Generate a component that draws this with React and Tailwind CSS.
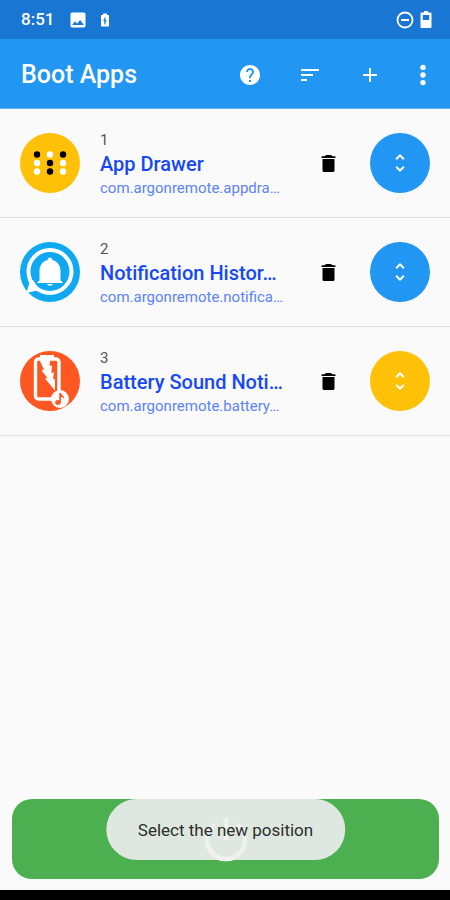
const apps = [
  { id: 1, name: "App Drawer", pkg: "com.argonremote.appdra…", Icon: DrawerIcon, color: "bg-[#2196f3]" },
  { id: 2, name: "Notification Histor…", pkg: "com.argonremote.notifica…", Icon: BellIcon, color: "bg-[#2196f3]" },
  { id: 3, name: "Battery Sound Noti…", pkg: "com.argonremote.battery…", Icon: BatteryIcon, color: "bg-[#ffc107]" },
];

function DrawerIcon() {
  const dots = [
    [17, 21.5, "#000"], [30, 21.5, "#fff"], [43, 21.5, "#000"],
    [17, 30, "#fff"], [30, 30, "#000"], [43, 30, "#fff"],
    [17, 38.5, "#fff"], [30, 38.5, "#000"], [43, 38.5, "#fff"],
  ];
  return (
    <svg viewBox="0 0 60 60" className="size-15 shrink-0" aria-hidden="true">
      <circle cx="30" cy="30" r="30" fill="#ffc107" />
      {dots.map(([x, y, c]) => (
        <circle key={`${x}-${y}`} cx={x} cy={y} r="3.2" fill={c} />
      ))}
    </svg>
  );
}

function BellIcon() {
  return (
    <svg viewBox="0 0 60 60" className="size-15 shrink-0" aria-hidden="true">
      <circle cx="30" cy="30" r="30" fill="#10a9f1" />
      <circle cx="30" cy="29.500" r="21.500" fill="none" stroke="#fff" strokeWidth="4" />
      <path d="M6.500 51 10 38.500 13 38l5.500 8.500-1.500 2Z" fill="#fff" />
      <path d="M30 15.500c1.500 0 2.300 1 2.300 2.500 5.200 1.300 8.200 5.500 8.200 11v9.500l2 1.500v1H17.500v-1l2-1.500V29c0-5.500 3-9.700 8.200-11 0-1.500.8-2.500 2.300-2.500Z" fill="#fff" />
      <path d="M27 42h6c-.5 1.300-1.700 1.700-3 1.700s-2.500-.4-3-1.700Z" fill="#fff" />
    </svg>
  );
}

function BatteryIcon() {
  return (
    <svg viewBox="0 0 60 60" className="size-15 shrink-0" aria-hidden="true">
      <circle cx="30" cy="30" r="30" fill="#ff5722" />
      <path d="M20 4h14v4H20Z" fill="#fff" />
      <rect x="15.500" y="8" width="23.500" height="40" rx="3" fill="none" stroke="#fff" strokeWidth="3.400" />
      <path d="M18.500 7h12l-1 8 2.500-.5-.5 7.500 2.500-.5-1 7 2-.5L35 39.500 25 27.500l2.500-.5-6-7.500 2.500-1Z" fill="#fff" />
      <circle cx="40" cy="48" r="9" fill="#fff" />
      <ellipse cx="38" cy="51.500" rx="2.800" ry="2.400" fill="#ff5722" />
      <path d="M39.300 51.500V42h1.700c.5 2.200 3.500 2.500 3 6-.6-1.500-1.700-2-3-2v5.500Z" fill="#ff5722" />
    </svg>
  );
}

function Glyph({ d, className }) {
  return (
    <svg viewBox="0 0 24 24" fill="currentColor" className={className} aria-hidden="true">
      <path d={d} />
    </svg>
  );
}

function StatusBar() {
  return (
    <div className="flex h-[39px] items-center bg-[#1976d2] pr-[18px] pl-[21px] text-white">
      <span className="w-[47px] text-[17px] font-medium">8:51</span>
      <Glyph className="size-5" d="M21 19V5c0-1.100-.9-2-2-2H5c-1.100 0-2 .9-2 2v14c0 1.100.9 2 2 2h14c1.100 0 2-.9 2-2zM8.500 13.500l2.500 3 3.500-4.500 4.500 6H5l3.500-4.500z" />
      <svg viewBox="0 0 10 14" className="ml-3 h-[14px] w-[10px]" aria-hidden="true">
        <path d="M1 2h2V.5h4V2h2v11.500H1Z" fill="#fff" />
        <path d="M5 4.500 3.700 8h1v3.500L6.300 7.500h-1Z" fill="#1976d2" stroke="#1976d2" strokeWidth=".5" />
      </svg>
      <svg viewBox="0 0 18 18" className="ml-auto size-[18px]" fill="none" stroke="#fff" strokeWidth="1.800" aria-hidden="true">
        <circle cx="9" cy="9" r="7.500" />
        <path d="M5 9h8" strokeWidth="2" />
      </svg>
      <svg viewBox="0 0 12 17" className="ml-[6px] h-[17px] w-[12px]" aria-hidden="true">
        <path d="M4 0h4v1.500h2.500a1 1 0 0 1 1 1V16a1 1 0 0 1-1 1h-9a1 1 0 0 1-1-1V2.500a1 1 0 0 1 1-1H4Z" fill="#fff" />
        <path d="M2.800 4h6.400v5H2.800Z" fill="#1976d2" />
      </svg>
    </div>
  );
}

function Toolbar() {
  return (
    <header className="flex h-[70px] items-center border-b border-[#5fb2f6] bg-[#2196f3] pt-0.5 pr-[15px] pl-[21px] text-white">
      <h1 className="mr-auto text-[25px] font-medium">Boot Apps</h1>
      <div className="flex items-center gap-9">
        <button type="button" aria-label="Help">
          <Glyph className="size-6" d="M12 2C6.480 2 2 6.480 2 12s4.480 10 10 10 10-4.480 10-10S17.520 2 12 2zm1 17h-2v-2h2v2zm2.070-7.750l-.9.920C13.450 12.900 13 13.500 13 15h-2v-.5c0-1.100.45-2.100 1.170-2.830l1.240-1.260c.37-.36.59-.86.59-1.410 0-1.100-.9-2-2-2s-2 .9-2 2H8c0-2.210 1.790-4 4-4s4 1.790 4 4c0 .88-.36 1.680-.93 2.250z" />
        </button>
        <button type="button" aria-label="Sort">
          <Glyph className="size-6" d="M3 18h6v-2H3v2zM3 6v2h18V6H3zm0 7h12v-2H3v2z" />
        </button>
        <button type="button" aria-label="Add">
          <Glyph className="size-6" d="M19 13h-6v6h-2v-6H5v-2h6V5h2v6h6v2z" />
        </button>
      </div>
      <button type="button" aria-label="More options" className="ml-[29px]">
        <svg viewBox="0 0 24 24" className="size-6" fill="currentColor" aria-hidden="true">
          <circle cx="12" cy="4.400" r="2.700" />
          <circle cx="12" cy="12" r="2.700" />
          <circle cx="12" cy="19.600" r="2.700" />
        </svg>
      </button>
    </header>
  );
}

function AppRow({ app }) {
  const { Icon } = app;
  return (
    <li className="flex h-[109px] items-center border-b border-[#e0e0e0] px-5">
      <Icon />
      <div className="ml-5 min-w-0 flex-1 pt-0.5">
        <p className="text-[15px] leading-5 text-[#555]">{app.id}</p>
        <h2 className="truncate text-xl leading-7 font-medium text-[#1648f5]">{app.name}</h2>
        <p className="truncate text-[15px] leading-5 text-[#5c83f8]">{app.pkg}</p>
      </div>
      <button type="button" aria-label={`Delete ${app.name}`} className="ml-[30px] text-black">
        <Glyph className="size-6" d="M6.500 8h12v11.500q0 1.500-1.500 1.500H8q-1.500 0-1.500-1.500zM5.500 5.500 9 5l1-1h5l1 1 3.500.5V7h-14z" />
      </button>
      <button
        type="button"
        aria-label={`Move ${app.name}`}
        className={`ml-[30px] flex size-15 shrink-0 items-center justify-center rounded-full text-white ${app.color}`}
      >
        <Glyph className="size-6" d="M12 5.830L15.170 9l1.410-1.410L12 3 7.410 7.590 8.830 9 12 5.830zm0 12.340L8.830 15l-1.410 1.410L12 21l4.590-4.590L15.170 15 12 18.170z" />
      </button>
    </li>
  );
}

export default function App() {
  return (
    <div className="flex min-h-screen flex-col bg-[#fafafa] font-[Roboto,sans-serif]">
      <StatusBar />
      <Toolbar />
      <main className="flex flex-1 flex-col">
        <ul>
          {apps.map((app) => (
            <AppRow key={app.id} app={app} />
          ))}
        </ul>
        <div className="relative mx-[11px] mt-auto mb-[11px] ml-3 h-20">
          <button
            type="button"
            aria-label="Start boot apps"
            className="flex size-full items-center justify-center rounded-[20px] bg-[#4caf50] text-white"
          >
            <svg viewBox="0 0 48 48" className="size-12" fill="none" stroke="currentColor" strokeWidth="4.500" aria-hidden="true">
              <path d="M24 3v22M13 9.500a19 19 0 1 0 22 0" />
            </svg>
          </button>
          <div
            role="status"
            className="absolute top-0 left-1/2 flex h-[61px] -translate-x-1/2 items-center rounded-full bg-[#f0eef0]/90 px-8 pt-0.5 text-[17px] whitespace-nowrap text-[#2b2e2b]"
          >
            Select the new position
          </div>
        </div>
      </main>
      <div className="h-[10px] bg-black" />
    </div>
  );
}
